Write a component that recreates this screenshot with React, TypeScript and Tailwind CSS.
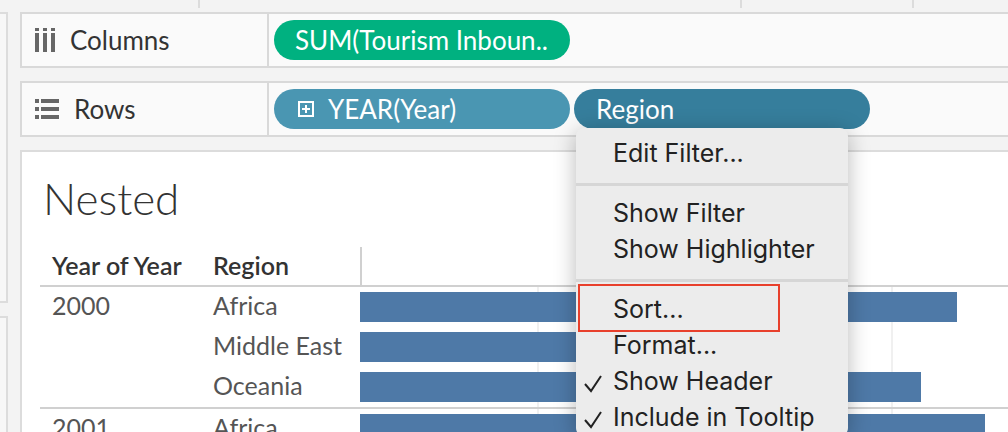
import React from "react";

const tab = { fontFamily: "Lato, 'Open Sans', sans-serif" };
const sys = { fontFamily: "Inter, 'Noto Sans', sans-serif" };

const rows = [
  { year: "2000", region: "Africa", w: 597 },
  { year: "", region: "Middle East", w: 440 },
  { year: "", region: "Oceania", w: 561 },
  { year: "2001", region: "Africa", w: 625, divider: true },
];

function ColumnsIcon() {
  return (
    <svg width="20" height="24" viewBox="0 0 20 24" className="shrink-0">
      {[0, 8, 16].map((x) => (
        <g key={x} fill="#666">
          <rect x={x} y="0" width="4" height="3" />
          <rect x={x} y="5" width="4" height="19" />
        </g>
      ))}
    </svg>
  );
}

function RowsIcon() {
  return (
    <svg width="24" height="20" viewBox="0 0 24 20" className="shrink-0">
      {[0, 8, 16].map((y) => (
        <g key={y} fill="#666">
          <rect x="0" y={y} width="4" height="4" />
          <rect x="6" y={y} width="18" height="4" />
        </g>
      ))}
    </svg>
  );
}

function Check() {
  return (
    <svg width="20" height="20" viewBox="0 0 20 20" className="absolute left-[7px] top-[10px]">
      <path d="M2 10 L8 17 L18 2" fill="none" stroke="#222" strokeWidth="2" />
    </svg>
  );
}

function Shelf({ icon, label, children }: { icon: React.ReactNode; label: string; children: React.ReactNode }) {
  return (
    <div className="flex h-[56px] shrink-0 border-2 border-r-0 border-[#d9d9d9] bg-[#fafafa]">
      <div className="flex w-[247px] items-center gap-[15px] border-r-2 border-[#d9d9d9] pl-[13px] text-[26px] text-[#333]" style={tab}>
        {icon}
        <span>{label}</span>
      </div>
      <div className="flex items-center gap-[4px] pl-[5px]">{children}</div>
    </div>
  );
}

function Pill({ color, children }: { color: string; children: React.ReactNode }) {
  return (
    <div
      className={`flex h-[40px] w-[296px] items-center gap-[14px] overflow-hidden whitespace-nowrap rounded-full pr-[10px] text-[26px] text-white ${color}`}
      style={tab}
    >
      {children}
    </div>
  );
}

export default function App() {
  const items: { label?: string; check?: boolean; sep?: boolean }[] = [
    { label: "Edit Filter..." },
    { sep: true },
    { label: "Show Filter" },
    { label: "Show Highlighter" },
    { sep: true },
    { label: "Sort..." },
    { label: "Format..." },
    { label: "Show Header", check: true },
    { label: "Include in Tooltip", check: true },
  ];

  return (
    <div className="relative flex h-[432px] w-[1008px] overflow-hidden bg-[#f3f3f3]">
      {/* left side panels */}
      <div className="flex w-[8px] shrink-0 flex-col gap-[13px] pt-[12px]">
        <div className="h-[291px] shrink-0 border-r-2 border-y-2 border-[#dcdcdc] bg-[#f7f7f7]" />
        <div className="flex-1 border-r-2 border-t-2 border-[#dcdcdc] bg-[#f7f7f7]" />
      </div>

      <div className="ml-[12px] flex min-h-0 flex-1 flex-col">
        <div className="-ml-[20px] flex h-[12px] shrink-0">
          <div className="h-[8px] w-[200px] border-r-2 border-[#dcdcdc]" />
          <div className="h-[8px] w-[542px] border-r-2 border-[#dcdcdc]" />
          <div className="h-[8px] w-[172px] border-r-2 border-[#dcdcdc]" />
        </div>

        <Shelf icon={<ColumnsIcon />} label="Columns">
          <Pill color="bg-[#00b180] pl-[21px]">SUM(Tourism Inboun..</Pill>
        </Shelf>

        <div className="h-[13px] shrink-0" />

        <Shelf icon={<RowsIcon />} label="Rows">
          <Pill color="bg-[#4a96b2] pl-[24px]">
            <svg width="16" height="16" viewBox="0 0 16 16" className="shrink-0">
              <rect x="1" y="1" width="14" height="14" fill="none" stroke="white" strokeWidth="2" />
              <path d="M8 4 V12 M4 8 H12" stroke="white" strokeWidth="2" />
            </svg>
            <span>YEAR(Year)</span>
          </Pill>
          <Pill color="bg-[#367e9c] pl-[22px]">Region</Pill>
        </Shelf>

        <div className="h-[13px] shrink-0" />

        {/* view card */}
        <div className="flex-1 shrink-0 border-2 border-r-0 border-b-0 border-[#dcdcdc] bg-white pl-[18px]">
          <div className="h-[95px] pl-[3px] pt-[24px] text-[44px] font-light leading-none text-[#333]" style={tab}>
            Nested
          </div>
          <div style={tab}>
            <div className="grid h-[40px] grid-cols-[161px_159px_1fr] border-b-2 border-[#d0d0d0]">
              <div className="flex items-end pb-[1px] pl-[12px] text-[25px] font-semibold text-[#333]">Year of Year</div>
              <div className="flex items-end pb-[1px] pl-[12px] text-[25px] font-semibold text-[#333]">Region</div>
              <div className="border-l-2 border-[#d0d0d0]" />
            </div>
            {rows.map((r, i) => (
              <div
                key={i}
                className={`grid h-[40px] grid-cols-[161px_159px_1fr] ${r.divider ? "border-t-2 border-[#d0d0d0]" : ""}`}
              >
                <div className="flex items-center pb-[2px] pl-[12px] text-[25px] text-[#555]">{r.year}</div>
                <div className="flex items-center pb-[2px] pl-[12px] text-[25px] text-[#555]">{r.region}</div>
                <div className="relative py-[5px]">
                  <div className="absolute left-[177px] top-0 h-full w-[2px] bg-[#f0f0f0]" />
                  <div className="absolute left-[531px] top-0 h-full w-[2px] bg-[#f0f0f0]" />
                  <div className="relative h-[30px] bg-[#4e79a7]" style={{ width: r.w }} />
                </div>
              </div>
            ))}
          </div>
        </div>
      </div>

      {/* context menu */}
      <div
        className="absolute left-[576px] top-[128px] w-[272px] rounded-[8px] bg-[#ececec] pt-[8px] shadow-[0_4px_22px_rgba(0,0,0,0.28)]"
        style={sys}
      >
        {items.map((it, i) =>
          it.sep ? (
            <div key={i} className="flex h-[24px] items-center">
              <div className="h-[3px] w-full bg-[#d6d6d6]" />
            </div>
          ) : (
            <div key={i} className="relative flex h-[36px] items-center pl-[37px] text-[25px] text-[#222]">
              {it.check && <Check />}
              {it.label}
            </div>
          )
        )}
        <div className="absolute left-[2px] top-[156px] h-[48px] w-[202px] border-2 border-[#e8402c]" />
      </div>
    </div>
  );
}
